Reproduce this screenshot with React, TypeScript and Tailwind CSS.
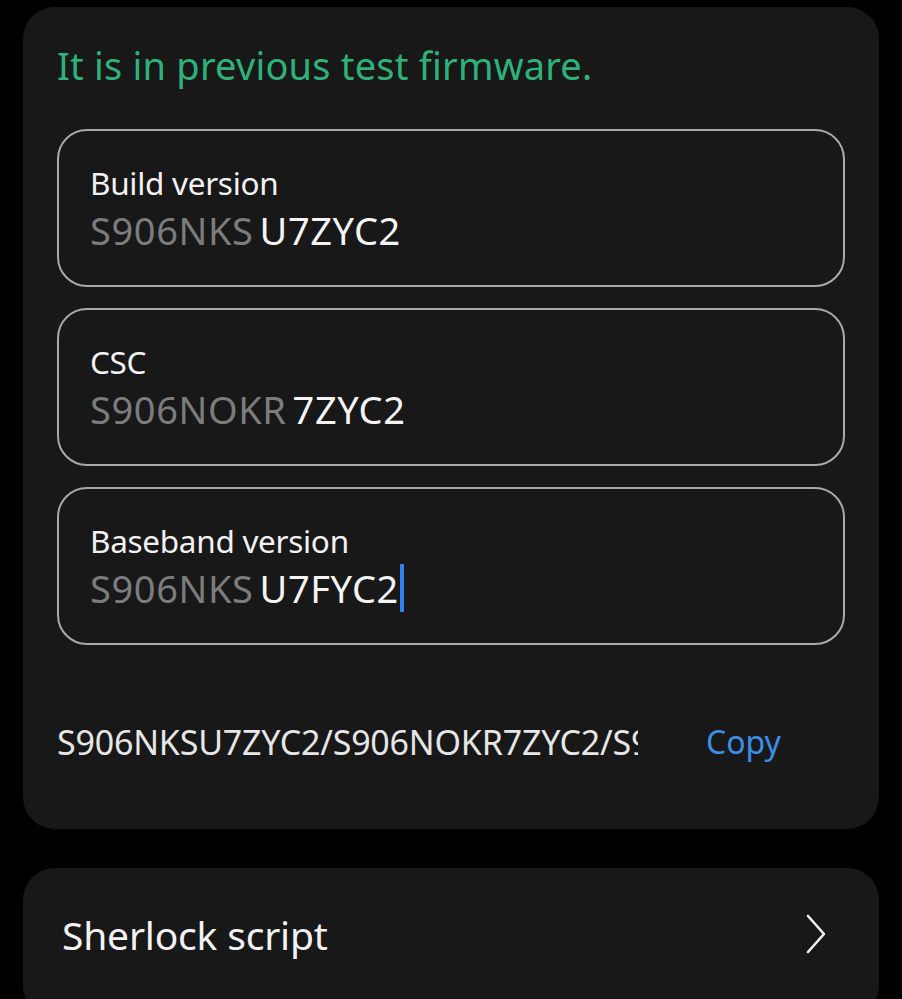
import React from 'react';

const font = { fontFamily: '"Noto Sans", "Open Sans", sans-serif' };

interface FieldProps {
  label: string;
  prefix: string;
  suffix: string;
  cursor?: boolean;
}

function Field({ label, prefix, suffix, cursor }: FieldProps) {
  return (
    <div className="h-[158px] rounded-[30px] border-2 border-[#a9a9a9] pl-[31px] pt-[33px]">
      <div className="text-[31.5px] leading-[38px] text-[#f2f2f2] tracking-[-0.3px]">{label}</div>
      <div className="mt-[4px] flex items-center text-[38px] leading-[48px] tracking-[0.6px]">
        <span className="text-[#7c7c7c]">{prefix}</span>
        <span className="ml-[6px] text-[#f4f4f4]">{suffix}</span>
        {cursor && <span className="ml-[1px] h-[48px] w-[4px] bg-[#2f7ff0]" />}
      </div>
    </div>
  );
}

export default function App() {
  return (
    <div className="min-h-[999px] w-[902px] overflow-hidden bg-black px-[23px] pt-[7px]" style={font}>
      {/* Firmware card */}
      <div className="rounded-[32px] bg-[#181818] px-[34px] pb-[67px] pt-[35px]">
        <div className="text-[38px] leading-[46px] text-[#2db37a] tracking-[0.2px]">
          It is in previous test firmware.
        </div>

        <div className="mt-[41px] flex flex-col gap-[21px]">
          <Field label="Build version" prefix="S906NKS" suffix="U7ZYC2" />
          <Field label="CSC" prefix="S906NOKR" suffix="7ZYC2" />
          <Field label="Baseband version" prefix="S906NKS" suffix="U7FYC2" cursor />
        </div>

        <div className="mt-[77px] flex items-center">
          <div className="w-[581px] overflow-hidden whitespace-nowrap text-[34px] leading-[40px] text-[#e6e6e6] tracking-[-0.2px]">
            S906NKSU7ZYC2/S906NOKR7ZYC2/S906NKSU7FYC2
          </div>
          <div className="ml-[68px] text-[32px] leading-[40px] text-[#3a8fe6]">Copy</div>
        </div>
      </div>

      {/* Sherlock script row */}
      <div className="mt-[39px] flex h-[150px] items-start justify-between rounded-[32px] bg-[#181818] pl-[39px] pr-[52px] pt-[43px]">
        <span className="text-[39px] leading-[48px] text-[#f2f2f2] tracking-[-0.2px]">Sherlock script</span>
        <svg className="mt-[3px]" width="22" height="40" viewBox="0 0 22 40" fill="none">
          <path d="M3 2 L19 20 L3 38" stroke="#f2f2f2" strokeWidth="2.6" strokeLinecap="round" strokeLinejoin="round" />
        </svg>
      </div>
    </div>
  );
}
